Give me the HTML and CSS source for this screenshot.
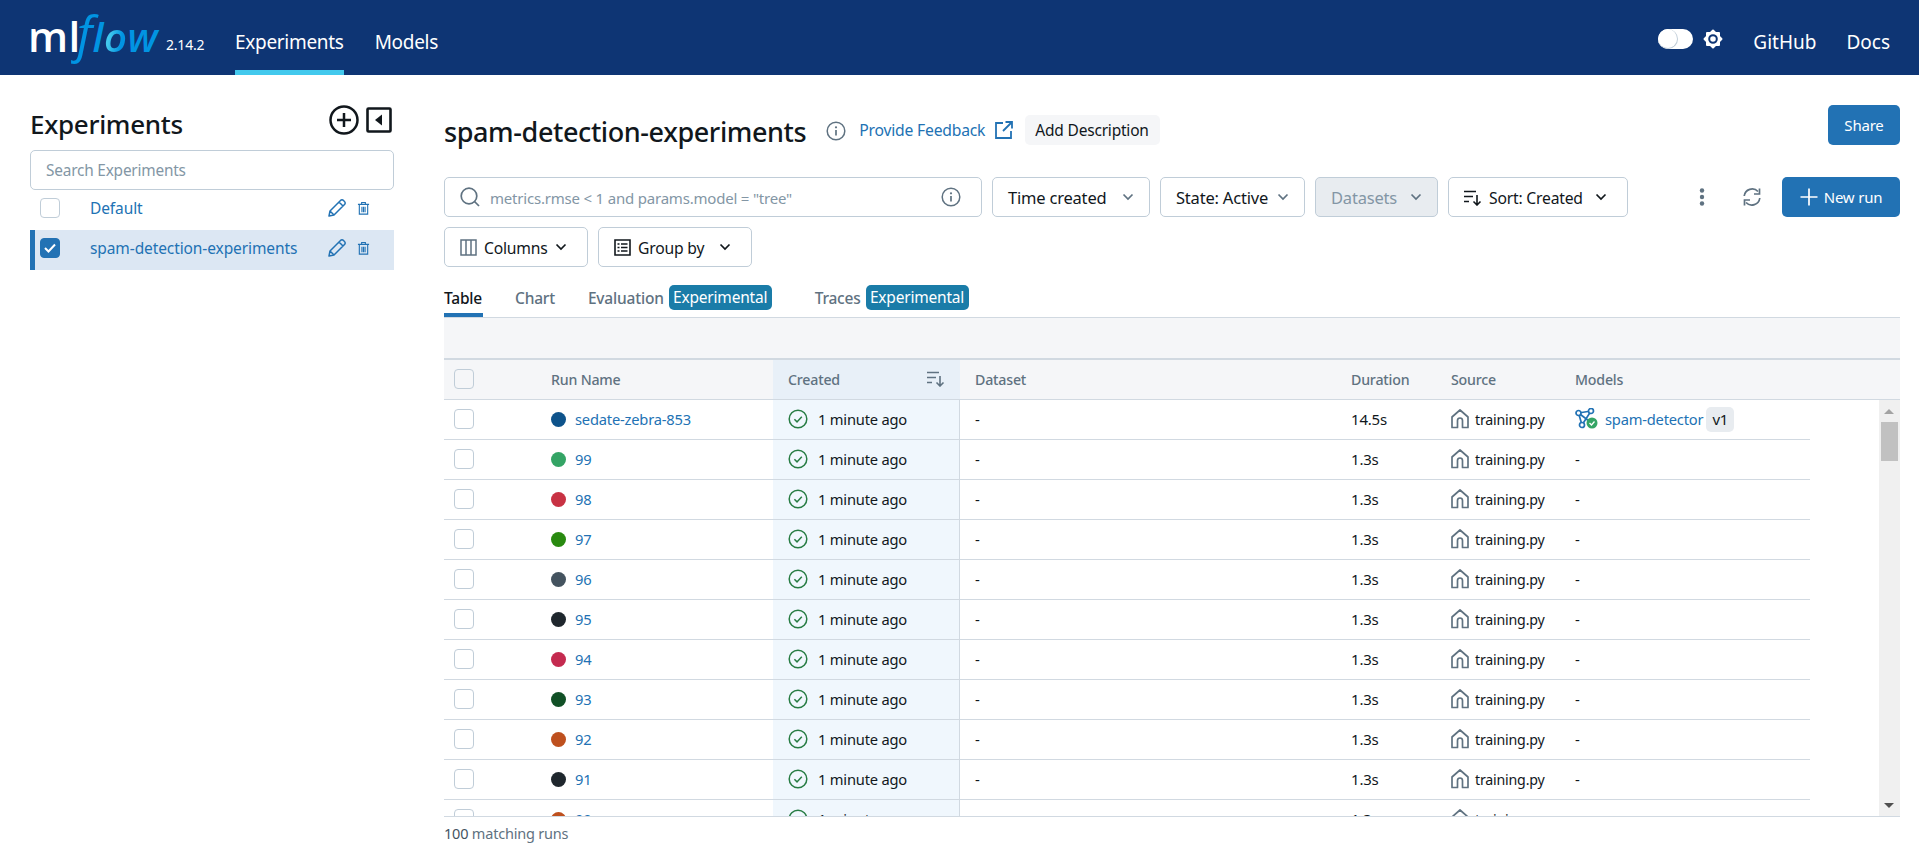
FILE: index.html
```html
<!DOCTYPE html>
<html lang="en">
<head>
    <meta charset="UTF-8">
    <title>MLflow</title>
    <link rel="stylesheet" href="styles.css">
</head>
<body>

<svg class="icon-defs" width="0" height="0">
    <symbol id="i-check" viewBox="0 0 20 20">
        <circle cx="10" cy="10" r="8.8" fill="none" stroke="#277C43" stroke-width="1.5"/>
        <path d="M6.4 10.3l2.6 2.6 4.8-5.2" fill="none" stroke="#277C43" stroke-width="1.5"/>
    </symbol>
    <symbol id="i-home" viewBox="0 0 18 20">
        <path d="M1 18.5V8l8-7 8 7v10.500h-5.500V11.500a2.500 2.500 0 0 0-5 0v7z" fill="none" stroke="#5F7281" stroke-width="1.700" stroke-linejoin="round"/>
    </symbol>
    <symbol id="i-pencil" viewBox="0 0 18 18">
        <path d="M1 17l1-5L12.500 1.500a2 2 0 0 1 3 0l1 1a2 2 0 0 1 0 3L6 16zM2 12l4 4M11 3l4 4" fill="none" stroke="#2272B4" stroke-width="1.500" stroke-linejoin="round"/>
    </symbol>
    <symbol id="i-trash" viewBox="0 0 14 15">
        <path d="M1 3h12M5 3V1h4v2M2.500 3v10.500h9V3M5.300 5.500v6M7 5.500v6M8.700 5.500v6" fill="none" stroke="#2272B4" stroke-width="1.200"/>
    </symbol>
    <symbol id="i-chev" viewBox="0 0 12 8">
        <path d="M1.500 1.500L6 6l4.500-4.500" fill="none" stroke="currentColor" stroke-width="1.700"/>
    </symbol>
    <symbol id="i-info" viewBox="0 0 20 20">
        <circle cx="10" cy="10" r="8.800" fill="none" stroke="#5F7281" stroke-width="1.500"/>
        <path d="M10 9v5.500" stroke="#5F7281" stroke-width="1.700"/>
        <circle cx="10" cy="6.300" r="1.100" fill="#5F7281"/>
    </symbol>
    <symbol id="i-sort" viewBox="0 0 18 16">
        <path d="M0 1.500h12M0 6.500h9M0 11.500h5M13 5v10M9.500 11.500L13 15l3.500-3.500" fill="none" stroke="currentColor" stroke-width="1.600"/>
    </symbol>
</svg>

<header class="topbar">
    <a class="logo"><span class="logo-ml">ml</span><span class="logo-f">f</span><span class="logo-flow">l<span class="logo-o">o</span>w</span></a>
    <span class="version">2.14.2</span>
    <nav class="nav-left">
        <a class="nav-item nav-active">Experiments</a>
        <a class="nav-item">Models</a>
    </nav>
    <div class="nav-right">
        <span class="toggle"><span class="toggle-knob"></span></span>
        <svg class="gear" width="20" height="20" viewBox="0 0 20 20">
            <rect x="3" y="3" width="14" height="14" rx="1" fill="#fff"/>
            <rect x="3" y="3" width="14" height="14" rx="1" fill="#fff" transform="rotate(45 10 10)"/>
            <circle cx="10" cy="10" r="3.800" fill="none" stroke="#0E3574" stroke-width="2"/>
        </svg>
        <a class="nav-link">GitHub</a>
        <a class="nav-link">Docs</a>
    </div>
</header>

<div class="page">
    <aside class="sidebar">
        <div class="side-head">
            <h1 class="side-title">Experiments</h1>
            <div class="side-tools">
                <svg width="30" height="30" viewBox="0 0 30 30">
                    <circle cx="15" cy="15" r="13.500" fill="none" stroke="#11171C" stroke-width="2.500"/>
                    <path d="M15 8v14M8 15h14" stroke="#11171C" stroke-width="2.500"/>
                </svg>
                <svg width="26" height="26" viewBox="0 0 26 26">
                    <rect x="1.500" y="1.500" width="23" height="23" rx="1" fill="none" stroke="#11171C" stroke-width="2.600"/>
                    <path d="M16 7.500v11l-7-5.500z" fill="#11171C"/>
                </svg>
            </div>
        </div>
        <div class="side-search">Search Experiments</div>
        <div class="exp-row">
            <span class="box"></span>
            <a class="exp-name">Default</a>
            <svg class="exp-edit" width="18" height="18"><use href="#i-pencil"/></svg>
            <svg class="exp-del" width="13" height="15"><use href="#i-trash"/></svg>
        </div>
        <div class="exp-row exp-selected">
            <span class="box box-on">
                <svg width="12" height="10" viewBox="0 0 12 10"><path d="M1 5l3.500 3.500L11 1.500" fill="none" stroke="#fff" stroke-width="2"/></svg>
            </span>
            <a class="exp-name">spam-detection-experiments</a>
            <svg class="exp-edit" width="18" height="18"><use href="#i-pencil"/></svg>
            <svg class="exp-del" width="13" height="15"><use href="#i-trash"/></svg>
        </div>
    </aside>

    <main class="main">
        <div class="title-row">
            <h2 class="exp-title">spam-detection-experiments</h2>
            <svg class="title-info" width="20" height="20"><use href="#i-info"/></svg>
            <a class="feedback">Provide Feedback</a>
            <svg class="feedback-icon" width="18" height="18" viewBox="0 0 18 18">
                <path d="M8 2H1v15h15v-7M10.500 1H17v6.500M17 1L8 10" fill="none" stroke="#2272B4" stroke-width="1.800"/>
            </svg>
            <a class="add-desc">Add Description</a>
            <a class="btn-primary btn-share">Share</a>
        </div>

        <div class="filter-row">
            <div class="search-box">
                <svg width="20" height="20" viewBox="0 0 20 20">
                    <circle cx="9" cy="9" r="7.800" fill="none" stroke="#5F7281" stroke-width="1.700"/>
                    <path d="M14.500 14.500L19 19" stroke="#5F7281" stroke-width="1.700"/>
                </svg>
                <span class="search-text">metrics.rmse &lt; 1 and params.model = "tree"</span>
                <svg width="20" height="20"><use href="#i-info"/></svg>
            </div>
            <button class="pick pick-large pick-time">Time created <svg class="chev" width="12" height="8"><use href="#i-chev"/></svg></button>
            <button class="pick pick-large pick-state">State: Active <svg class="chev" width="12" height="8"><use href="#i-chev"/></svg></button>
            <button class="pick pick-large pick-data">Datasets <svg class="chev" width="12" height="8"><use href="#i-chev"/></svg></button>
            <button class="pick pick-sort">
                <svg class="pick-icon" width="18" height="16"><use href="#i-sort"/></svg>
                Sort: Created
                <svg class="chev dark" width="12" height="8"><use href="#i-chev"/></svg>
            </button>
            <div class="filter-actions">
                <svg width="6" height="18" viewBox="0 0 6 18">
                    <circle cx="3" cy="2.500" r="2.200" fill="#5F7281"/>
                    <circle cx="3" cy="9" r="2.200" fill="#5F7281"/>
                    <circle cx="3" cy="15.500" r="2.200" fill="#5F7281"/>
                </svg>
                <svg class="refresh" width="18" height="18" viewBox="0 0 18 18">
                    <path d="M1.200 8A8 8 0 0 1 15 3.500M16.800 10A8 8 0 0 1 3 14.500" fill="none" stroke="#5F7281" stroke-width="1.700"/>
                    <path d="M16.500 0.500V6h-5.500M1.500 17.500V12H7" fill="none" stroke="#5F7281" stroke-width="1.700"/>
                </svg>
                <a class="btn-primary btn-new">
                    <svg width="18" height="18" viewBox="0 0 18 18"><path d="M9 0.500v17M0.500 9h17" stroke="#fff" stroke-width="1.700"/></svg>
                    New run
                </a>
            </div>
        </div>

        <div class="filter-row second">
            <button class="pick pick-cols">
                <svg class="pick-icon" width="17" height="17" viewBox="0 0 17 17">
                    <path d="M1 1h15v15H1zM6 1v15M11 1v15" fill="none" stroke="#5F7281" stroke-width="1.500"/>
                </svg>
                Columns
                <svg class="chev dark" width="12" height="8"><use href="#i-chev"/></svg>
            </button>
            <button class="pick pick-group">
                <svg class="pick-icon" width="17" height="17" viewBox="0 0 17 17">
                    <path d="M1 1h15v15H1z" fill="none" stroke="#11171C" stroke-width="1.600"/>
                    <path d="M3.500 5h2M7 5h6.500M3.500 8.500h2M7 8.500h6.500M3.500 12h2M7 12h6.500" stroke="#11171C" stroke-width="1.500"/>
                </svg>
                Group by
                <svg class="chev dark" width="12" height="8"><use href="#i-chev"/></svg>
            </button>
        </div>

        <div class="tabs">
            <a class="tab tab-active">Table</a>
            <a class="tab tab-chart">Chart</a>
            <a class="tab tab-eval">Evaluation</a>
            <span class="tag">Experimental</span>
            <a class="tab tab-traces">Traces</a>
            <span class="tag">Experimental</span>
        </div>

        <div class="grid-band"></div>

        <div class="grid">
            <div class="grid-row grid-head">
                <div class="cell"><span class="box box-head"></span></div>
                <div class="cell cell-run">Run Name</div>
                <div class="cell cell-created">Created <svg class="head-sort" width="18" height="16"><use href="#i-sort"/></svg></div>
                <div class="cell">Dataset</div>
                <div class="cell">Duration</div>
                <div class="cell">Source</div>
                <div class="cell">Models</div>
            </div>
            <div class="grid-body">
                <div class="grid-rows">
                    <div class="grid-row">
                        <div class="cell"><span class="box"></span></div>
                        <div class="cell cell-run"><span class="dot c0"></span><a class="run-link">sedate-zebra-853</a></div>
                        <div class="cell cell-created"><svg width="20" height="20"><use href="#i-check"/></svg><span>1 minute ago</span></div>
                        <div class="cell">-</div>
                        <div class="cell">14.5s</div>
                        <div class="cell cell-source"><svg width="18" height="20"><use href="#i-home"/></svg><span>training.py</span></div>
                        <div class="cell cell-model">
                            <svg width="23" height="22" viewBox="0 0 23 22">
                                <path d="M3.500 5L16 3M3.500 5L7 17M16 3L7 17M3.500 5L14 13" fill="none" stroke="#2272B4" stroke-width="1.700"/>
                                <circle cx="3.500" cy="5" r="2.500" fill="#fff" stroke="#2272B4" stroke-width="1.700"/>
                                <circle cx="16" cy="3" r="2.500" fill="#fff" stroke="#2272B4" stroke-width="1.700"/>
                                <circle cx="7" cy="17" r="2.500" fill="#fff" stroke="#2272B4" stroke-width="1.700"/>
                                <circle cx="17" cy="15" r="5.500" fill="#34A465"/>
                                <path d="M14.500 15l2 2 3-3.500" fill="none" stroke="#fff" stroke-width="1.300"/>
                            </svg>
                            <a class="run-link">spam-detector</a>
                            <span class="version-tag">v1</span>
                        </div>
                    </div>
                    <div class="grid-row">
                        <div class="cell"><span class="box"></span></div>
                        <div class="cell cell-run"><span class="dot c1"></span><a class="run-link">99</a></div>
                        <div class="cell cell-created"><svg width="20" height="20"><use href="#i-check"/></svg><span>1 minute ago</span></div>
                        <div class="cell">-</div>
                        <div class="cell">1.3s</div>
                        <div class="cell cell-source"><svg width="18" height="20"><use href="#i-home"/></svg><span>training.py</span></div>
                        <div class="cell">-</div>
                    </div>
                    <div class="grid-row">
                        <div class="cell"><span class="box"></span></div>
                        <div class="cell cell-run"><span class="dot c2"></span><a class="run-link">98</a></div>
                        <div class="cell cell-created"><svg width="20" height="20"><use href="#i-check"/></svg><span>1 minute ago</span></div>
                        <div class="cell">-</div>
                        <div class="cell">1.3s</div>
                        <div class="cell cell-source"><svg width="18" height="20"><use href="#i-home"/></svg><span>training.py</span></div>
                        <div class="cell">-</div>
                    </div>
                    <div class="grid-row">
                        <div class="cell"><span class="box"></span></div>
                        <div class="cell cell-run"><span class="dot c3"></span><a class="run-link">97</a></div>
                        <div class="cell cell-created"><svg width="20" height="20"><use href="#i-check"/></svg><span>1 minute ago</span></div>
                        <div class="cell">-</div>
                        <div class="cell">1.3s</div>
                        <div class="cell cell-source"><svg width="18" height="20"><use href="#i-home"/></svg><span>training.py</span></div>
                        <div class="cell">-</div>
                    </div>
                    <div class="grid-row">
                        <div class="cell"><span class="box"></span></div>
                        <div class="cell cell-run"><span class="dot c4"></span><a class="run-link">96</a></div>
                        <div class="cell cell-created"><svg width="20" height="20"><use href="#i-check"/></svg><span>1 minute ago</span></div>
                        <div class="cell">-</div>
                        <div class="cell">1.3s</div>
                        <div class="cell cell-source"><svg width="18" height="20"><use href="#i-home"/></svg><span>training.py</span></div>
                        <div class="cell">-</div>
                    </div>
                    <div class="grid-row">
                        <div class="cell"><span class="box"></span></div>
                        <div class="cell cell-run"><span class="dot c5"></span><a class="run-link">95</a></div>
                        <div class="cell cell-created"><svg width="20" height="20"><use href="#i-check"/></svg><span>1 minute ago</span></div>
                        <div class="cell">-</div>
                        <div class="cell">1.3s</div>
                        <div class="cell cell-source"><svg width="18" height="20"><use href="#i-home"/></svg><span>training.py</span></div>
                        <div class="cell">-</div>
                    </div>
                    <div class="grid-row">
                        <div class="cell"><span class="box"></span></div>
                        <div class="cell cell-run"><span class="dot c6"></span><a class="run-link">94</a></div>
                        <div class="cell cell-created"><svg width="20" height="20"><use href="#i-check"/></svg><span>1 minute ago</span></div>
                        <div class="cell">-</div>
                        <div class="cell">1.3s</div>
                        <div class="cell cell-source"><svg width="18" height="20"><use href="#i-home"/></svg><span>training.py</span></div>
                        <div class="cell">-</div>
                    </div>
                    <div class="grid-row">
                        <div class="cell"><span class="box"></span></div>
                        <div class="cell cell-run"><span class="dot c7"></span><a class="run-link">93</a></div>
                        <div class="cell cell-created"><svg width="20" height="20"><use href="#i-check"/></svg><span>1 minute ago</span></div>
                        <div class="cell">-</div>
                        <div class="cell">1.3s</div>
                        <div class="cell cell-source"><svg width="18" height="20"><use href="#i-home"/></svg><span>training.py</span></div>
                        <div class="cell">-</div>
                    </div>
                    <div class="grid-row">
                        <div class="cell"><span class="box"></span></div>
                        <div class="cell cell-run"><span class="dot c8"></span><a class="run-link">92</a></div>
                        <div class="cell cell-created"><svg width="20" height="20"><use href="#i-check"/></svg><span>1 minute ago</span></div>
                        <div class="cell">-</div>
                        <div class="cell">1.3s</div>
                        <div class="cell cell-source"><svg width="18" height="20"><use href="#i-home"/></svg><span>training.py</span></div>
                        <div class="cell">-</div>
                    </div>
                    <div class="grid-row">
                        <div class="cell"><span class="box"></span></div>
                        <div class="cell cell-run"><span class="dot c5"></span><a class="run-link">91</a></div>
                        <div class="cell cell-created"><svg width="20" height="20"><use href="#i-check"/></svg><span>1 minute ago</span></div>
                        <div class="cell">-</div>
                        <div class="cell">1.3s</div>
                        <div class="cell cell-source"><svg width="18" height="20"><use href="#i-home"/></svg><span>training.py</span></div>
                        <div class="cell">-</div>
                    </div>
                    <div class="grid-row">
                        <div class="cell"><span class="box"></span></div>
                        <div class="cell cell-run"><span class="dot c8"></span><a class="run-link">90</a></div>
                        <div class="cell cell-created"><svg width="20" height="20"><use href="#i-check"/></svg><span>1 minute ago</span></div>
                        <div class="cell">-</div>
                        <div class="cell">1.3s</div>
                        <div class="cell cell-source"><svg width="18" height="20"><use href="#i-home"/></svg><span>training.py</span></div>
                        <div class="cell">-</div>
                    </div>
                </div>
                <div class="scrollbar">
                    <span class="arrow-up"></span>
                    <span class="thumb"></span>
                    <span class="arrow-down"></span>
                </div>
            </div>
        </div>

        <div class="grid-footer"><b>100</b> matching runs</div>
    </main>
</div>

</body>
</html>
```

FILE: styles.css
```css
* {
    box-sizing: border-box;
}

body {
    margin: 0;
    height: 849px;
    overflow: hidden;
    font-family: "Noto Sans", "Open Sans", Arial, sans-serif;
    font-size: 15px;
    letter-spacing: -0.2px;
    color: #11171C;
    background: #fff;
}

.icon-defs {
    position: absolute;
}

svg {
    flex: none;
}

/* top bar */
.topbar {
    height: 75px;
    background: #0E3574;
    color: #fff;
    display: flex;
    align-items: center;
    padding: 0 29px 0 30px;
}

.logo {
    width: 130px;
    display: flex;
    align-items: baseline;
    height: 75px;
    padding-top: 3px;
    line-height: 60px;
    white-space: nowrap;
    font-family: "Open Sans", sans-serif;
    font-size: 40px;
    letter-spacing: 0;
}

.logo-ml {
    color: #fff;
    font-size: 42px;
    font-weight: 600;
    letter-spacing: 0.5px;
    margin-left: -2px;
}

.logo-f {
    font-size: 50px;
    font-style: italic;
    color: #0194E2;
    margin-left: -4px;
}

.logo-flow {
    font-style: italic;
    font-weight: 600;
    color: #0194E2;
    letter-spacing: 0.5px;
}

.logo-o {
    background: linear-gradient(100deg, #43C9ED 30%, #0194E2 70%);
    -webkit-background-clip: text;
    background-clip: text;
    color: transparent;
}

.version {
    font-size: 14px;
    margin: 14px 0 0 6px;
    width: 39px;
}

.nav-left {
    display: flex;
    gap: 31px;
    margin-left: 30px;
    height: 75px;
}

.nav-item {
    font-size: 19px;
    letter-spacing: -0.3px;
    line-height: 84px;
    height: 75px;
}

.nav-active {
    border-bottom: 5px solid #43C9ED;
}

.nav-right {
    margin-left: auto;
    display: flex;
    align-items: center;
}

.toggle {
    width: 35px;
    height: 20px;
    border-radius: 10px;
    background: #fff;
    display: block;
    margin-top: 3px;
}

.toggle-knob {
    display: block;
    width: 20px;
    height: 20px;
    border-radius: 50%;
    background: #fff;
    border: 1px solid #C0CDD8;
    border-width: 0 1.5px 1.5px 0;
}

.gear {
    margin: 3px 0 0 10px;
}

.nav-link {
    font-size: 19px;
    letter-spacing: 0;
    margin: 8px 0 0 30px;
}

/* page */
.page {
    display: flex;
}

.sidebar {
    width: 444px;
    padding: 30px 0 0 30px;
    flex: none;
}

.side-head {
    width: 364px;
    height: 45px;
    display: flex;
    justify-content: space-between;
}

.side-title {
    margin: 1px 0 0;
    font-size: 26px;
    font-weight: 500;
    line-height: 36px;
    letter-spacing: -0.3px;
}

.side-tools {
    display: flex;
    align-items: flex-start;
    gap: 7px;
    padding: 0 2px 0 0;
}

.side-tools svg:last-child {
    margin-top: 2px;
}

.side-search {
    width: 364px;
    height: 40px;
    border: 1px solid #C0CDD8;
    border-radius: 5px;
    padding: 1px 0 0 15px;
    line-height: 38px;
    font-size: 15.4px;
    color: #8396A5;
}

.exp-row {
    width: 364px;
    height: 40px;
    display: flex;
    align-items: center;
    padding: 0 0 4px 10px;
}

.exp-selected {
    background: #DCE7F3;
    border-left: 5px solid #2272B4;
    padding-left: 5px;
}

.box {
    width: 20px;
    height: 20px;
    border: 1.5px solid #C0CDD8;
    border-radius: 4px;
    background: #fff;
    display: flex;
    align-items: center;
    justify-content: center;
    flex: none;
}

.box-on {
    background: #2272B4;
    border-color: #2272B4;
}

.box-head {
    background: #F5F6F8;
}

.exp-name {
    color: #2272B4;
    font-size: 15.5px;
    letter-spacing: -0.1px;
    margin-left: 30px;
    width: 238px;
    white-space: nowrap;
}

.exp-del {
    margin-left: 11px;
}

/* main column */
.main {
    width: 1456px;
    flex: none;
    padding-top: 30px;
}

.title-row {
    height: 72px;
    display: flex;
    align-items: flex-start;
}

.exp-title {
    margin: 0;
    font-size: 27px;
    font-weight: 500;
    line-height: 54px;
    letter-spacing: -0.4px;
    white-space: nowrap;
}

.title-info {
    margin: 16px 0 0 20px;
}

.feedback {
    color: #2272B4;
    font-size: 15.7px;
    margin: 0 0 0 13px;
    line-height: 50px;
}

.feedback-icon {
    margin: 16px 0 0 10px;
}

.add-desc {
    height: 30px;
    line-height: 30px;
    font-size: 15.5px;
    padding: 0 11px 0 10px;
    margin: 10px 0 0 12px;
    background: #F5F6F8;
    border-radius: 5px;
}

.btn-primary {
    background: #2272B4;
    color: #fff;
    border-radius: 5px;
    height: 40px;
    line-height: 40px;
    text-align: center;
}

.btn-share {
    margin-left: auto;
    width: 72px;
}

.filter-row {
    display: flex;
    align-items: center;
    height: 40px;
    gap: 10px;
}

.filter-row.second {
    margin-top: 10px;
}

.search-box {
    width: 538px;
    height: 40px;
    flex: none;
    border: 1px solid #C0CDD8;
    border-radius: 5px;
    display: flex;
    align-items: center;
    padding: 0 20px 0 15px;
}

.search-text {
    color: #8396A5;
    margin-left: 10px;
    padding-top: 2px;
    flex: 1;
    white-space: nowrap;
}

.pick {
    height: 40px;
    flex: none;
    border: 1px solid #C0CDD8;
    border-radius: 5px;
    background: #fff;
    display: flex;
    align-items: center;
    padding: 1px 15px 0;
    font: inherit;
    font-size: 15.7px;
    letter-spacing: inherit;
    color: #11171C;
    white-space: nowrap;
}

.pick-large {
    font-size: 16.5px;
    justify-content: space-between;
}

.pick-time {
    width: 158px;
}

.pick-state {
    width: 145px;
}

.pick-data {
    width: 123px;
    background: #E8ECF0;
    color: #8396A5;
}

.pick-sort {
    width: 180px;
}

.pick-cols {
    width: 144px;
}

.pick-group {
    width: 154px;
}

.chev {
    color: #5F7281;
    margin-top: -2px;
}

.chev.dark {
    color: #11171C;
    margin: -2px 5px 0 auto;
}

.pick-icon {
    color: #11171C;
    margin-right: 7px;
}

.filter-actions {
    flex: 1;
    display: flex;
    align-items: center;
    padding-left: 61px;
}

.refresh {
    margin-left: 38px;
}

.btn-new {
    width: 118px;
    display: flex;
    align-items: center;
    justify-content: center;
    gap: 6px;
    margin-left: auto;
}

/* tabs */
.tabs {
    display: flex;
    align-items: center;
    height: 51px;
    padding-top: 15px;
    border-bottom: 1px solid #D1D9E1;
    font-size: 15.5px;
}

.tab {
    color: #5F7281;
    height: 35px;
    line-height: 32px;
    font-weight: 500;
}

.tab-active {
    width: 39px;
    color: #11171C;
    border-bottom: 4px solid #2272B4;
}

.tab-chart {
    margin-left: 32px;
}

.tab-eval {
    margin-left: 33px;
}

.tab-traces {
    margin-left: 43px;
}

.tag {
    background: #1A7CA8;
    color: #fff;
    height: 25px;
    line-height: 24px;
    margin: -4px 0 0 5px;
    border-radius: 5px;
    width: 103px;
    text-align: center;
    white-space: nowrap;
}

.grid-band {
    height: 42px;
    background: #F5F6F8;
    border-bottom: 2px solid #D1D9E1;
}

/* table */
.grid {
    height: 457px;
    overflow: hidden;
    border-bottom: 1px solid #D1D9E1;
}

.grid-row {
    display: grid;
    grid-template-columns: 97px 232px 187px 376px 100px 124px 250px;
    height: 40px;
    border-bottom: 1px solid #D1D9E1;
}

.grid-head {
    width: 100%;
    height: 40px;
    grid-template-columns: 97px 232px 187px 376px 100px 124px 340px;
    background: #F5F6F8;
    color: #5F7281;
    font-weight: 500;
    font-size: 14.2px;
}

.cell {
    display: flex;
    align-items: center;
    padding: 0 0 1px 15px;
    white-space: nowrap;
}

.cell:first-child {
    padding-left: 10px;
}

.cell-run {
    padding-left: 10px;
}

.cell-created {
    background: #F0F7FD;
    border-right: 1px solid #D1D9E1;
    gap: 10px;
    font-size: 14.7px;
}

.grid-head .cell-created {
    background: #E8F0F8;
    justify-content: space-between;
    padding-right: 15px;
    border-right: 0;
    font-size: 14.2px;
}

.head-sort {
    color: #5F7281;
}

.cell-source {
    gap: 6px;
    font-size: 14.2px;
}

.cell-model {
    gap: 7px;
}

.dot {
    width: 15px;
    height: 15px;
    border-radius: 50%;
    margin-right: 9px;
}

.c0 { background: #0E538B; }
.c1 { background: #34A465; }
.c2 { background: #C83243; }
.c3 { background: #298A10; }
.c4 { background: #44535F; }
.c5 { background: #1F272D; }
.c6 { background: #C42A4F; }
.c7 { background: #115026; }
.c8 { background: #BE501E; }

.run-link {
    color: #2272B4;
    font-size: 14.7px;
}

.version-tag {
    height: 25px;
    line-height: 25px;
    padding: 0 6px;
    margin-left: -4px;
    background: #E8ECF0;
    border-radius: 5px;
}

.grid-body {
    display: flex;
    justify-content: space-between;
}

.grid-rows {
    width: 1366px;
    flex: none;
}

.scrollbar {
    width: 21px;
    height: 417px;
    background: #F0F0F0;
    position: relative;
}

.thumb {
    position: absolute;
    left: 2px;
    top: 22px;
    width: 17px;
    height: 39px;
    background: #C1C1C1;
}

.arrow-up,
.arrow-down {
    position: absolute;
    left: 5px;
    width: 0;
    height: 0;
    border-left: 5px solid transparent;
    border-right: 5px solid transparent;
}

.arrow-up {
    top: 9px;
    border-bottom: 5px solid #A3A3A3;
}

.arrow-down {
    bottom: 9px;
    border-top: 5px solid #505050;
}

.grid-footer {
    color: #5F7281;
    line-height: 32px;
    font-size: 14.5px;
}

.grid-footer b {
    font-weight: 400;
    color: #44535F;
}
```
